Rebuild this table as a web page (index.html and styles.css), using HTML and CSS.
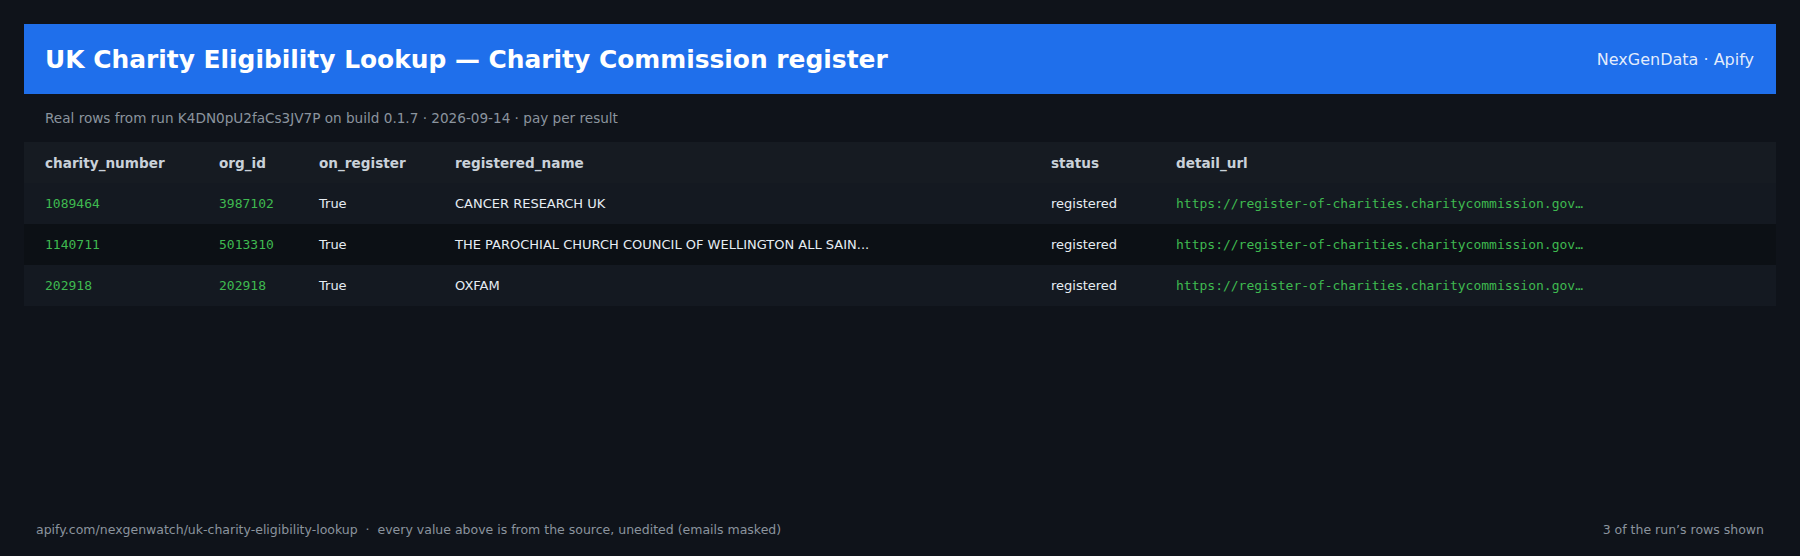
FILE: index.html
```html
<!DOCTYPE html>
<html lang="en">
<head>
<meta charset="utf-8">
<title>UK Charity Eligibility Lookup</title>
<link rel="stylesheet" href="styles.css">
</head>
<body>
<header class="banner">
  <h1 class="banner-title">UK Charity Eligibility Lookup — Charity Commission register</h1>
  <div class="banner-brand">NexGenData · Apify</div>
</header>
<p class="subtitle">Real rows from run K4DN0pU2faCs3JV7P on build 0.1.7 · 2026-09-14 · pay per result</p>
<div class="table">
  <div class="row head">
    <div class="cell">charity_number</div>
    <div class="cell">org_id</div>
    <div class="cell">on_register</div>
    <div class="cell">registered_name</div>
    <div class="cell">status</div>
    <div class="cell">detail_url</div>
  </div>
  <div class="row">
    <div class="cell mono">1089464</div>
    <div class="cell mono">3987102</div>
    <div class="cell">True</div>
    <div class="cell">CANCER RESEARCH UK</div>
    <div class="cell">registered</div>
    <div class="cell mono">https://register-of-charities.charitycommission.gov…</div>
  </div>
  <div class="row alt">
    <div class="cell mono">1140711</div>
    <div class="cell mono">5013310</div>
    <div class="cell">True</div>
    <div class="cell">THE PAROCHIAL CHURCH COUNCIL OF WELLINGTON ALL SAIN...</div>
    <div class="cell">registered</div>
    <div class="cell mono">https://register-of-charities.charitycommission.gov…</div>
  </div>
  <div class="row">
    <div class="cell mono">202918</div>
    <div class="cell mono">202918</div>
    <div class="cell">True</div>
    <div class="cell">OXFAM</div>
    <div class="cell">registered</div>
    <div class="cell mono">https://register-of-charities.charitycommission.gov…</div>
  </div>
</div>
<footer class="footer">
  <span>apify.com/nexgenwatch/uk-charity-eligibility-lookup &nbsp;·&nbsp; every value above is from the source, unedited (emails masked)</span>
  <span>3 of the run’s rows shown</span>
</footer>
</body>
</html>
```
FILE: styles.css
```css
* { box-sizing: border-box; }
html, body { height: 100%; }
body {
  margin: 0;
  padding: 24px 24px 16px;
  background: #0f131a;
  color: #e6edf3;
  font-family: "DejaVu Sans", "Noto Sans", sans-serif;
  display: flex;
  flex-direction: column;
}
.banner {
  height: 70px;
  background: #1f6feb;
  display: flex;
  align-items: center;
  justify-content: space-between;
  padding: 0 22px 0 21px;
}
.banner-title {
  margin: 0;
  font-size: 24.9px;
  font-weight: bold;
  color: #ffffff;
}
.banner-brand {
  font-size: 16px;
  color: rgba(255, 255, 255, 0.88);
}
.subtitle {
  margin: 0;
  padding: 14px 21px;
  font-size: 13.6px;
  line-height: 20px;
  color: #8b949e;
}
.table {
  display: flex;
  flex-direction: column;
}
.row {
  display: grid;
  grid-template-columns: 174px 100px 136px 596px 125px 1fr;
  height: 41px;
  align-items: center;
  background: #141921;
  font-size: 13px;
  color: #e6edf3;
}
.row.head {
  background: #161b22;
  font-size: 13.6px;
  font-weight: bold;
  color: #c9d1d9;
}
.row.alt { background: #0c1015; }
.cell {
  padding: 0 21px;
  white-space: nowrap;
}
.mono {
  font-family: "DejaVu Sans Mono", "Liberation Mono", monospace;
  font-size: 13px;
  color: #3fb950;
}
.footer {
  margin-top: auto;
  display: flex;
  justify-content: space-between;
  padding: 0 12px;
  font-size: 12.5px;
  line-height: 20px;
  color: #8b949e;
}
```
